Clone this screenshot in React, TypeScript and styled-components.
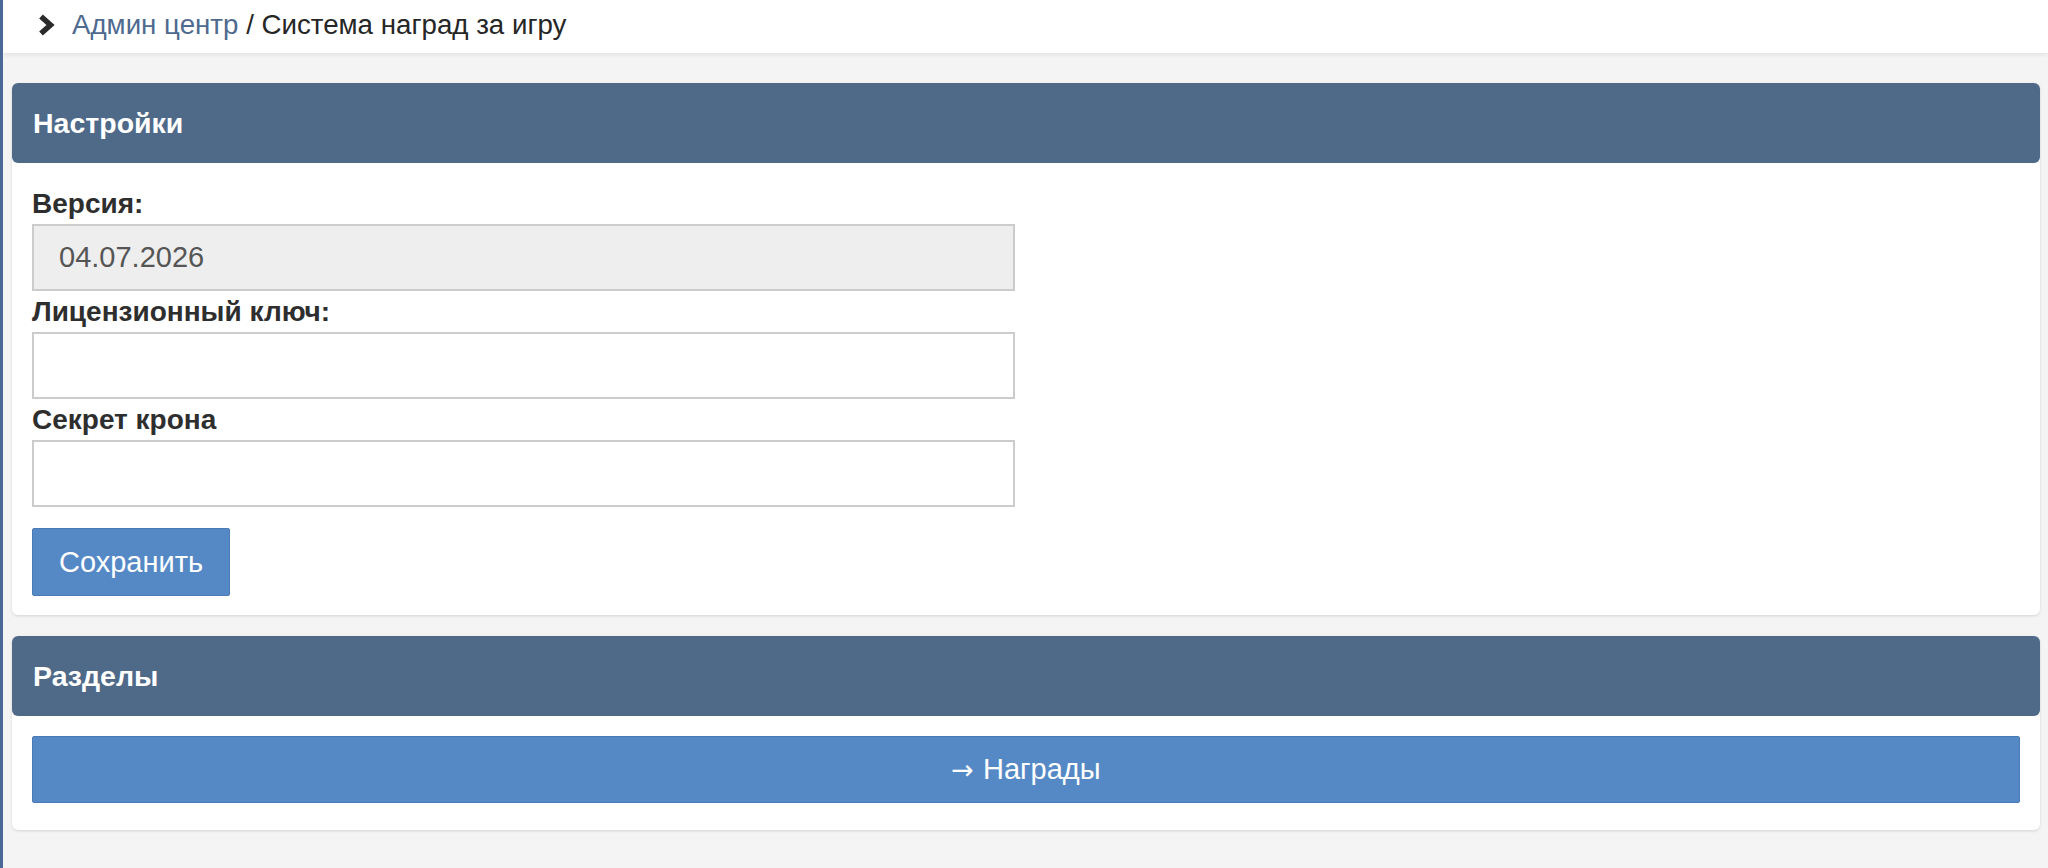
import React, { FC } from 'react';
import styled, { createGlobalStyle } from 'styled-components';

const GlobalStyle = createGlobalStyle`
  html, body {
    margin: 0;
    padding: 0;
  }

  body {
    min-height: 100vh;
    background: #f4f4f4;
    border-left: 3px solid #4a6898;
    box-sizing: border-box;
    font-family: "Liberation Sans", Arial, sans-serif;
    color: #333;
  }
`;

const TopBar = styled.div`
  display: flex;
  align-items: center;
  height: 53px;
  padding: 0 0 4px 34px;
  box-sizing: border-box;
  background: #fff;
  box-shadow: 0 2px 4px rgba(0, 0, 0, 0.07);
  font-size: 27.7px;
  color: #262626;
`;

const Chevron = styled.svg`
  width: 18px;
  height: 24px;
  margin-right: 17px;
  flex-shrink: 0;
`;

const CrumbLink = styled.a`
  color: #4f6a8f;
  text-decoration: none;
`;

const Main = styled.div`
  display: flex;
  flex-direction: column;
  gap: 21px;
  padding: 30px 8px 0 9px;
`;

const Card = styled.section`
  background: #fff;
  border-radius: 6px;
  box-shadow: 0 1px 3px rgba(0, 0, 0, 0.13);
`;

const CardHeader = styled.h3`
  display: flex;
  align-items: center;
  height: 80px;
  margin: 0;
  padding: 0 21px;
  border-radius: 6px;
  background: #4f6a89;
  color: #fff;
  font-size: 28.5px;
  font-weight: bold;
`;

const CardBody = styled.div<{ $top: number; $bottom: number }>`
  padding: ${(p) => p.$top}px 20px ${(p) => p.$bottom}px;
`;

const Form = styled.form`
  display: flex;
  flex-direction: column;
  align-items: flex-start;
`;

const Field = styled.div`
  display: flex;
  flex-direction: column;
  width: 983px;
  margin-bottom: 5px;
`;

const Label = styled.label`
  display: block;
  margin-bottom: 4px;
  font-size: 28px;
  line-height: 32px;
  font-weight: bold;
  color: #2e2e2e;
`;

const Input = styled.input`
  height: 67px;
  padding: 0 25px;
  box-sizing: border-box;
  border: 2px solid #cccccc;
  border-radius: 0;
  background: ${(p) => (p.readOnly ? '#eeeeee' : '#fff')};
  font-family: inherit;
  font-size: 29px;
  color: #555;
  outline: none;
`;

const Button = styled.button<{ $block?: boolean }>`
  display: flex;
  align-items: center;
  justify-content: center;
  gap: 9px;
  width: ${(p) => (p.$block ? '100%' : 'auto')};
  height: ${(p) => (p.$block ? 67 : 68)}px;
  margin-top: ${(p) => (p.$block ? 0 : 16)}px;
  padding: 0 26px;
  box-sizing: border-box;
  border: 1px solid #4a7bb7;
  border-radius: 2px;
  background: #5589c6;
  color: #fff;
  font-family: inherit;
  font-size: 29px;
  cursor: pointer;
`;

const Arrow = styled.span`
  font-family: "DejaVu Sans", sans-serif;
  font-size: 27px;
`;

const App: FC = () => (
  <>
    <GlobalStyle />
    <TopBar>
      <Chevron viewBox="0 0 18 24">
        <path d="M4 3.5 L13.5 12 L4 20.5" fill="none" stroke="#2b2b2b" strokeWidth="5.5" />
      </Chevron>
      <CrumbLink href="#">Админ центр</CrumbLink>
      &nbsp;/ Система наград за игру
    </TopBar>
    <Main>
      <Card>
        <CardHeader>Настройки</CardHeader>
        <CardBody $top={25} $bottom={19}>
          <Form onSubmit={(e) => e.preventDefault()}>
            <Field>
              <Label>Версия:</Label>
              <Input readOnly value="04.07.2026" />
            </Field>
            <Field>
              <Label>Лицензионный ключ:</Label>
              <Input />
            </Field>
            <Field>
              <Label>Секрет крона</Label>
              <Input />
            </Field>
            <Button type="submit">Сохранить</Button>
          </Form>
        </CardBody>
      </Card>
      <Card>
        <CardHeader>Разделы</CardHeader>
        <CardBody $top={20} $bottom={27}>
          <Button type="button" $block>
            <Arrow>→</Arrow>
            Награды
          </Button>
        </CardBody>
      </Card>
    </Main>
  </>
);

export default App;
